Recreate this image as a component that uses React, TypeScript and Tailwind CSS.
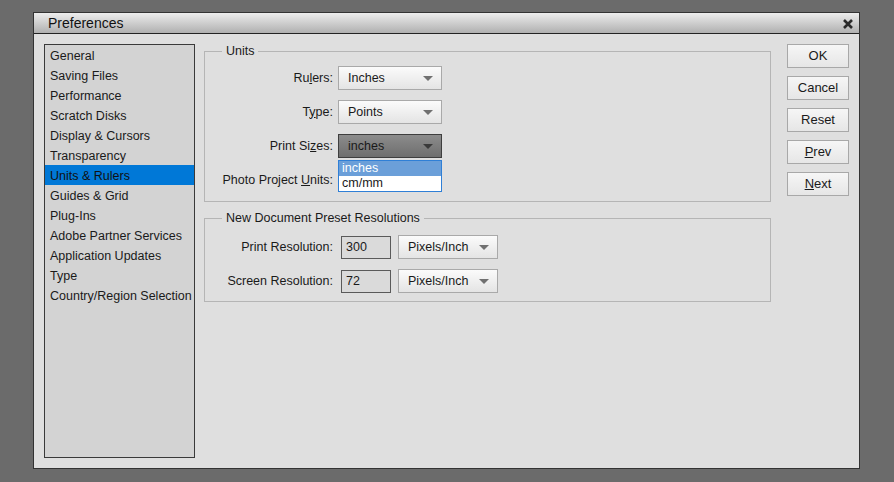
import React from "react";

const FONT = { fontFamily: '"Liberation Sans", Arial, sans-serif' };

const CATEGORIES = [
  "General",
  "Saving Files",
  "Performance",
  "Scratch Disks",
  "Display & Cursors",
  "Transparency",
  "Units & Rulers",
  "Guides & Grid",
  "Plug-Ins",
  "Adobe Partner Services",
  "Application Updates",
  "Type",
  "Country/Region Selection",
];

const Arrow = ({ dark }: { dark?: boolean }) => (
  <svg width="10" height="5" viewBox="0 0 10 5" className="shrink-0">
    <polygon points="0,0 10,0 5,5" fill={dark ? "#3a3a3a" : "#707070"} />
  </svg>
);

const Select = ({
  value,
  width = "w-[104px]",
  dark,
}: {
  value: string;
  width?: string;
  dark?: boolean;
}) => (
  <div
    className={`${width} h-[24px] flex items-center justify-between pl-[9px] pr-[8px] border ${
      dark
        ? "border-[#3e3e3e] bg-gradient-to-b from-[#8c8c8c] to-[#6e6e6e] text-[#1a1a1a]"
        : "border-[#a9a9a9] bg-gradient-to-b from-[#fbfbfb] to-[#e4e4e4] text-[#1a1a1a]"
    }`}
  >
    <span>{value}</span>
    <Arrow dark={dark} />
  </div>
);

const Btn = ({ children }: { children: React.ReactNode }) => (
  <button className="w-[62px] h-[24px] border border-[#a8a8a8] bg-gradient-to-b from-[#f6f6f6] to-[#e6e6e6] text-[13px] text-[#1a1a1a] flex items-center justify-center">
    {children}
  </button>
);

export default function App() {
  return (
    <div
      className="w-[894px] h-[482px] bg-[#6b6b6b] pt-[12px] pl-[33px] overflow-hidden text-[12.5px] text-[#1a1a1a]"
      style={FONT}
    >
      <div className="w-[827px] h-[457px] border border-[#333] bg-[#dfdfdf] flex flex-col">
        {/* Title bar */}
        <div className="h-[21px] shrink-0 border-b border-[#222] bg-gradient-to-b from-[#ededed] to-[#b0b0b0] flex items-center justify-between pl-[14px] pr-[5px] pt-[1px]">
          <span className="text-[14px] text-[#111]">Preferences</span>
          <svg width="12" height="12" viewBox="0 0 12 12">
            <path d="M2 2 L10 10 M10 2 L2 10" stroke="#2a2a2a" strokeWidth="2.6" />
          </svg>
        </div>

        {/* Body */}
        <div className="flex pt-[10px] pl-[10px]">
          {/* Category list */}
          <div className="w-[151px] h-[414px] border border-[#3a3a3a] bg-[#d3d3d3] shrink-0">
            {CATEGORIES.map((c) => (
              <div
                key={c}
                className={`h-[20px] leading-[22px] pl-[5px] whitespace-nowrap ${
                  c === "Units & Rulers" ? "bg-[#0078d7] text-[#111]" : ""
                }`}
              >
                {c}
              </div>
            ))}
          </div>

          {/* Settings */}
          <div className="ml-[9px] w-[567px] shrink-0 flex flex-col">
            <fieldset className="h-[158px] border border-[#b5b5b5] m-0 p-0">
              <legend className="ml-[17px] px-[4px] h-[15px] leading-[15px]">Units</legend>
              <div className="flex flex-col gap-[10px] pt-[7px]">
                <div className="flex items-center">
                  <div className="w-[128px] text-right">
                    Ru<u>l</u>ers:
                  </div>
                  <div className="ml-[5px]">
                    <Select value="Inches" />
                  </div>
                </div>
                <div className="flex items-center">
                  <div className="w-[128px] text-right">
                    T<u>y</u>pe:
                  </div>
                  <div className="ml-[5px]">
                    <Select value="Points" />
                  </div>
                </div>
                <div className="flex items-center">
                  <div className="w-[128px] text-right">
                    Print Si<u>z</u>es:
                  </div>
                  <div className="ml-[5px]">
                    <Select value="inches" dark />
                  </div>
                </div>
                <div className="flex items-center">
                  <div className="w-[128px] text-right whitespace-nowrap">
                    Photo Project <u>U</u>nits:
                  </div>
                  <div className="ml-[5px] relative w-[104px] h-[24px]">
                    {/* open dropdown list covering the select */}
                    <div className="absolute left-0 top-[-8px] w-[104px] h-[32px] border border-[#2f7fd6] bg-white">
                      <div className="h-[15px] leading-[15px] pl-[3px] bg-[#6b9fd9] text-white">inches</div>
                      <div className="h-[15px] leading-[15px] pl-[3px]">cm/mm</div>
                    </div>
                  </div>
                </div>
              </div>
            </fieldset>

            <fieldset className="mt-[9px] h-[91px] border border-[#b5b5b5] m-0 p-0">
              <legend className="ml-[17px] px-[4px] h-[15px] leading-[15px]">
                New Document Preset Resolutions
              </legend>
              <div className="flex flex-col gap-[10px] pt-[9px]">
                <div className="flex items-center">
                  <div className="w-[128px] text-right">Print Resolution:</div>
                  <div className="ml-[8px] w-[50px] h-[23px] border border-[#5a5a5a] bg-[#dadada] pl-[4px] leading-[20px]">
                    300
                  </div>
                  <div className="ml-[7px]">
                    <Select value="Pixels/Inch" width="w-[100px]" />
                  </div>
                </div>
                <div className="flex items-center">
                  <div className="w-[128px] text-right">Screen Resolution:</div>
                  <div className="ml-[8px] w-[50px] h-[23px] border border-[#5a5a5a] bg-[#dadada] pl-[4px] leading-[20px]">
                    72
                  </div>
                  <div className="ml-[7px]">
                    <Select value="Pixels/Inch" width="w-[100px]" />
                  </div>
                </div>
              </div>
            </fieldset>
          </div>

          {/* Buttons */}
          <div className="ml-[16px] flex flex-col gap-[8px]">
            <Btn>OK</Btn>
            <Btn>Cancel</Btn>
            <Btn>Reset</Btn>
            <Btn>
              <u>P</u>rev
            </Btn>
            <Btn>
              <u>N</u>ext
            </Btn>
          </div>
        </div>
      </div>
    </div>
  );
}
